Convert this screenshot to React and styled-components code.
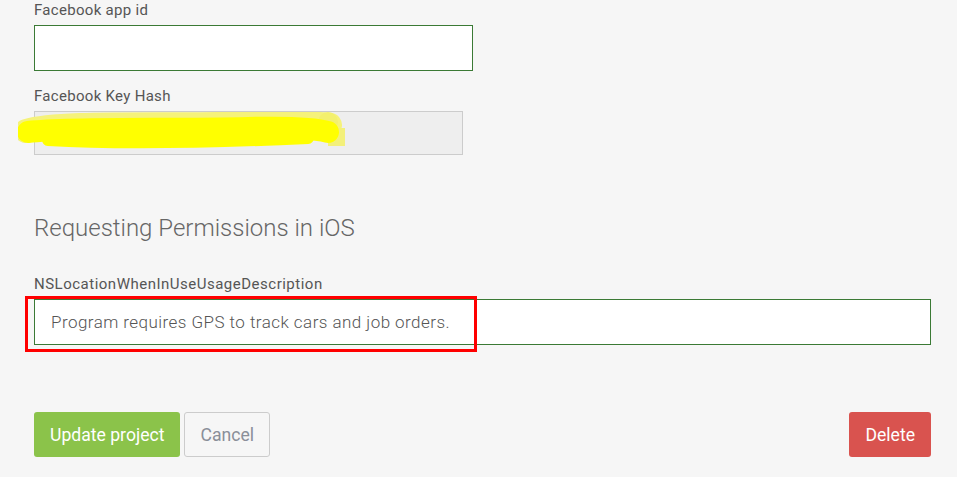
import React from 'react'
import styled, { createGlobalStyle } from 'styled-components'

const GlobalStyle = createGlobalStyle`
  body {
    margin: 0;
    background: #f6f6f6;
    font-family: Roboto, "Liberation Sans", sans-serif;
  }
`

const Page = styled.div`
  padding: 0 26px 20px 34px;
`

const Field = styled.div`
  position: relative;
  width: ${props => props.width || '100%'};
  margin-bottom: ${props => props.gap || 0}px;
`

const Label = styled.div`
  font-size: 15px;
  line-height: 20px;
  letter-spacing: ${props => props.small ? 0.5 : 0.3}px;
  color: #555;
  margin-bottom: 5px;
`

const Input = styled.input`
  all: unset;
  display: block;
  box-sizing: border-box;
  width: 100%;
  height: ${props => props.height || 46}px;
  padding: 0 16px;
  border: 1px solid ${props => props.disabled ? '#cccccc' : '#3b7a35'};
  background: ${props => props.disabled ? '#eeeeee' : '#ffffff'};
  font-size: 17px;
  font-weight: 300;
  letter-spacing: 0.45px;
  color: #555;
  font-family: Roboto, "Liberation Sans", sans-serif;
`

const Scribble = styled.svg`
  position: absolute;
  left: -16px;
  top: 26px;
  pointer-events: none;
`

const Highlight = styled.div`
  position: absolute;
  left: -9px;
  top: 22px;
  width: 452px;
  height: 56px;
  box-sizing: border-box;
  border: 3px solid #ff0000;
  pointer-events: none;
`

const Heading = styled.h3`
  margin: 57px 0 30px;
  font-size: 24px;
  font-weight: 300;
  color: #666;
  line-height: 32px;
`

const Actions = styled.div`
  display: flex;
  align-items: center;
  gap: 4px;
  margin-top: 67px;
`

const Button = styled.button`
  all: unset;
  box-sizing: border-box;
  height: 45px;
  padding: 0 15px;
  border-radius: 3px;
  font-size: 17.6px;
  font-family: Roboto, "Liberation Sans", sans-serif;
  color: ${props => props.variant === 'default' ? '#8a8f99' : '#ffffff'};
  background: ${props => ({ primary: '#8bc34a', danger: '#d9534f', default: '#f6f6f6' })[props.variant]};
  border: 1px solid ${props => props.variant === 'default' ? '#cccccc' : 'transparent'};
`

const Spacer = styled.div`
  flex: 1;
`

function App() {
  return (
    <Page>
      <GlobalStyle />
      <Field width="439px" gap={15}>
        <Label>Facebook app id</Label>
        <Input />
      </Field>

      <Field width="429px">
        <Label>Facebook Key Hash</Label>
        <Input disabled height={44} />
        <Scribble width="330" height="42" viewBox="0 0 330 42">
          <path d="M8 19 C40 10 120 13 200 12 C250 11 290 10 312 13" stroke="#f5f27a" strokeWidth="24" strokeLinecap="round" fill="none" />
          <circle cx="310" cy="10" r="10" fill="#f3f06e" />
          <rect x="310" y="16" width="17" height="18" fill="#f3f07a" />
          <path d="M10 20 C60 15 150 18 230 16 C270 15 300 17 310 20" stroke="#ffff00" strokeWidth="22" strokeLinecap="round" fill="none" />
          <path d="M30 28 C100 32 200 30 290 26" stroke="#ffff00" strokeWidth="12" strokeLinecap="round" fill="none" />
        </Scribble>
      </Field>

      <Heading>Requesting Permissions in iOS</Heading>

      <Field>
        <Label small>NSLocationWhenInUseUsageDescription</Label>
        <Input defaultValue="Program requires GPS to track cars and job orders." />
        <Highlight />
      </Field>

      <Actions>
        <Button variant="primary">Update project</Button>
        <Button variant="default">Cancel</Button>
        <Spacer />
        <Button variant="danger">Delete</Button>
      </Actions>
    </Page>
  )
}

export default App
